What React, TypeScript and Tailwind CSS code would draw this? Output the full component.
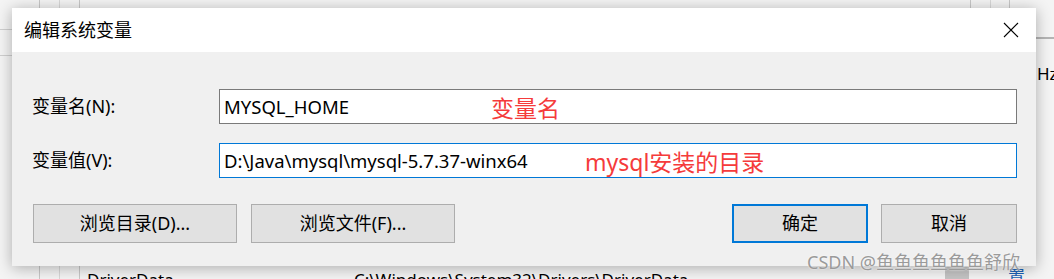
export default function App() {
  const font = { fontFamily: '"Noto Sans", "Noto Sans CJK SC", sans-serif' };

  return (
    <div className="relative h-[279px] w-[1054px] overflow-hidden bg-[#f4f4f4]" style={font}>
      {/* window behind the dialog */}
      <div className="absolute inset-0 flex">
        <div className="flex w-[40px] flex-col border-r border-[#c8c8c8]">
          <div className="h-[30px] border-b border-[#cfcfcf]" />
          <div className="h-[26px] border-b border-[#cfcfcf]" />
        </div>
        <div className="w-[20px] border-r border-[#d8d8d8]" />
        <div className="w-[20px] border-r border-[#c8c8c8]" />
        <div className="flex flex-1 flex-col justify-end">
          <div className="flex h-[9px] items-start text-[17px] leading-[20px] text-black">
            <span className="ml-[7px] w-[267px]">DriverData</span>
            <span>C:\Windows\System32\Drivers\DriverData</span>
          </div>
        </div>
      </div>
      <div className="absolute left-[970px] top-0 flex h-[10px]">
        <div className="w-[20px] border-l border-[#c8c8c8]" />
        <div className="w-[19px] border-l border-[#d8d8d8]" />
        <div className="w-[1px] bg-[#c8c8c8]" />
      </div>
      <div className="absolute left-[1036px] top-[37px] flex w-[18px] flex-col">
        <div className="h-[2px] bg-[#b4b4b4]" />
        <span className="ml-px mt-[22px] text-[17px] text-black">Hz</span>
      </div>
      <div className="absolute left-[945px] top-[267px] flex items-start">
        <div className="h-[12px] w-[24px] bg-[#c4c4c4]" />
        <span className="ml-[39px] text-[17px] leading-[20px] text-[#1a5fb4]">置</span>
      </div>

      {/* dialog */}
      <div className="absolute left-[12px] top-[8px] flex h-[258px] w-[1024px] flex-col bg-[#f0f0f0] shadow-[0_2px_14px_rgba(0,0,0,0.3)]">
        <div className="flex h-[44px] items-center justify-between bg-white pl-[12px] pr-[17px]">
          <span className="text-[18px] text-black">编辑系统变量</span>
          <svg width="16" height="16" viewBox="0 0 16 16" className="text-black">
            <path d="M1 1 L15 15 M15 1 L1 15" stroke="currentColor" strokeWidth="1.1" fill="none" />
          </svg>
        </div>

        <div className="flex flex-col pl-[20px] pr-[19px] pt-[37px]">
          <div className="flex items-center">
            <label className="w-[187px] text-[18px] text-black">变量名(N):</label>
            <div className="relative flex h-[35px] flex-1 items-center border border-[#7a7a7a] bg-white px-[4px] text-[18.5px] text-black">
              MYSQL_HOME
              <span className="absolute left-[271px] top-[1px] text-[23px] text-[#f53b3b]">变量名</span>
            </div>
          </div>
          <div className="mt-[19px] flex items-center">
            <label className="w-[187px] text-[18px] text-black">变量值(V):</label>
            <div className="relative flex h-[35px] flex-1 items-center border border-[#0078d7] bg-white px-[4px] text-[18.5px] text-black">
              D:\Java\mysql\mysql-5.7.37-winx64
              <span className="absolute left-[365px] top-[1px] text-[23px] text-[#f53b3b]">mysql安装的目录</span>
            </div>
          </div>

          <div className="mt-[26px] flex items-center gap-[14px]">
            <button className="ml-[1px] h-[39px] w-[204px] border border-[#adadad] bg-[#e1e1e1] text-[18px] text-black">
              浏览目录(D)...
            </button>
            <button className="h-[39px] w-[204px] border border-[#adadad] bg-[#e1e1e1] text-[18px] text-black">
              浏览文件(F)...
            </button>
            <div className="flex-1" />
            <button className="h-[39px] w-[136px] border-2 border-[#0078d7] bg-[#e1e1e1] text-[18px] text-black">
              确定
            </button>
            <button className="-ml-px h-[39px] w-[136px] border border-[#adadad] bg-[#e1e1e1] text-[18px] text-black">
              取消
            </button>
          </div>
        </div>
      </div>

      {/* watermark */}
      <div className="absolute left-[807px] top-[249px] whitespace-nowrap text-[18px] text-[#9a9a9a] [text-shadow:0_0_2px_#fff]">
        CSDN @鱼鱼鱼鱼鱼鱼舒欣
      </div>
    </div>
  );
}
